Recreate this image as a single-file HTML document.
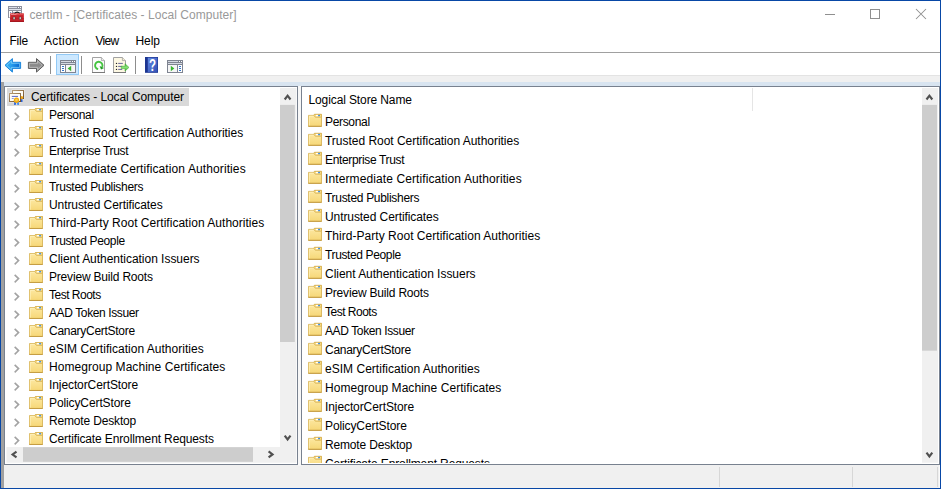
<!DOCTYPE html>
<html><head><meta charset="utf-8"><title>certlm</title>
<style>
html,body{margin:0;padding:0;background:#fff;}
body{width:941px;height:489px;overflow:hidden;position:relative;font-family:"Liberation Sans",sans-serif;font-size:12px;color:#000;}
#win{position:absolute;left:0;top:0;width:941px;height:489px;box-sizing:border-box;border:1px solid #0847a6;background:#fff;overflow:hidden;}
.a{position:absolute;}
.t{position:absolute;white-space:nowrap;line-height:18px;height:18px;}
.fo,.ch,.ic{position:absolute;overflow:visible;}
.pane{position:absolute;background:#fff;border:1px solid #78818f;box-sizing:border-box;overflow:hidden;}
</style></head><body>
<svg width="0" height="0" style="position:absolute"><defs>
<linearGradient id="fg" x1="0" y1="0" x2="0" y2="1"><stop offset="0" stop-color="#fde9a4"/><stop offset="1" stop-color="#f6d777"/></linearGradient>
</defs></svg>
<div id="win">

<div class="a" style="left:-1px;top:-1px;width:941px;height:489px;">
<svg class="ic" style="left:7px;top:4px" width="19" height="19" viewBox="7 4 19 19">
<rect x="8" y="6" width="14" height="12" fill="#8c909e"/>
<rect x="9" y="7" width="12" height="1" fill="#dadee7"/>
<rect x="17" y="7" width="1" height="1" fill="#8c909e"/><rect x="19" y="7" width="1" height="1" fill="#8c909e"/><rect x="18" y="7" width="1" height="1" fill="#fff"/><rect x="20" y="7" width="1" height="1" fill="#fff"/>
<rect x="9" y="9" width="12" height="1" fill="#dfe3ec"/>
<rect x="9" y="11" width="12" height="6.4" fill="#fff"/>
<rect x="12" y="11" width="1" height="7" fill="#8c909e"/>
<rect x="13" y="12" width="8" height="1" fill="#9da1ae"/>
<rect x="10" y="12" width="1.2" height="1" fill="#7d8cb5"/>
<path d="M14.4 13.8 Q17.1 10.4 19.8 13.8" fill="none" stroke="#161616" stroke-width="1.2"/>
<path d="M10.2 13.5 L23.8 13.5 L24 22 L10 22 Z" fill="#c9242c"/>
<rect x="10.2" y="13.5" width="13.6" height="1.6" fill="#de4a4f"/>
<rect x="11" y="14.1" width="5.5" height="0.7" fill="#f0a0a2"/>
<rect x="10.1" y="18.3" width="13.8" height="0.6" fill="#b01c24"/>
<rect x="10" y="20.8" width="14" height="1.2" fill="#a5161e"/>
<rect x="13.1" y="16.9" width="1.9" height="2.6" fill="#d4ebea" stroke="#5b1a1c" stroke-width="0.5"/>
<rect x="19.2" y="16.9" width="1.9" height="2.6" fill="#d4ebea" stroke="#5b1a1c" stroke-width="0.5"/>
</svg>
<div class="t" style="left:29.5px;top:6px;color:#999;letter-spacing:0.046px;">certlm - [Certificates - Local Computer]</div>
<svg class="ic" style="left:820px;top:4px" width="112" height="20" viewBox="820 4 112 20">
<path d="M825 14.5 H835" stroke="#8f8f8f" stroke-width="1"/>
<rect x="870.5" y="9.5" width="9" height="9" fill="none" stroke="#8f8f8f" stroke-width="1"/>
<path d="M916 9 L926 19 M926 9 L916 19" stroke="#8f8f8f" stroke-width="1.05"/>
</svg>
<div class="t" style="left:9.4px;top:32px;letter-spacing:-0.200px;">File</div>
<div class="t" style="left:44px;top:32px;letter-spacing:0.240px;">Action</div>
<div class="t" style="left:95.4px;top:32px;letter-spacing:-0.633px;">View</div>
<div class="t" style="left:135.4px;top:32px;letter-spacing:-0.033px;">Help</div>
<div class="a" style="left:1px;top:52px;width:939px;height:1px;background:#a0a0a0"></div>
<div class="a" style="left:1px;top:75px;width:939px;height:1px;background:#e3e3e3"></div>
<div class="a" style="left:1px;top:76px;width:939px;height:412px;background:#f0f0f0"></div>
<div class="a" style="left:4px;top:82px;width:936px;height:5px;background:#d8e4f0"></div>
<div class="a" style="left:1px;top:82px;width:3px;height:406px;background:#a0a0a0"></div>
<div class="a" style="left:298px;top:86px;width:3px;height:380px;background:#f7f7f7"></div>
<svg class="ic" style="left:0px;top:53px" width="200" height="22" viewBox="0 53 200 22">
<defs>
<linearGradient id="ba" x1="0" y1="0" x2="1" y2="0.25"><stop offset="0" stop-color="#3db5f6"/><stop offset="0.45" stop-color="#2aa3f0"/><stop offset="1" stop-color="#0668d2"/></linearGradient>
<linearGradient id="ga" x1="0" y1="0" x2="0" y2="1"><stop offset="0" stop-color="#a4a4a4"/><stop offset="0.5" stop-color="#8a8a8a"/><stop offset="1" stop-color="#a8a8a8"/></linearGradient>
<linearGradient id="hb" x1="0" y1="0" x2="1" y2="1"><stop offset="0" stop-color="#6288e2"/><stop offset="1" stop-color="#3350b4"/></linearGradient>
<linearGradient id="ar" x1="0" y1="0" x2="0" y2="1"><stop offset="0" stop-color="#3db230"/><stop offset="0.5" stop-color="#86e276"/><stop offset="1" stop-color="#35a82a"/></linearGradient>
</defs>
<path d="M5 65.3 L12.4 58.6 L12.4 62.3 L20.6 62.3 L20.6 68.4 L12.4 68.4 L12.4 72.1 Z" fill="url(#ba)" stroke="#1c86dc" stroke-width="1" stroke-linejoin="round"/>
<path d="M6.7 65.3 L11.4 61 L11.4 63.3 L19.6 63.3 L19.6 67.4 L11.4 67.4 L11.4 69.7 Z" fill="none" stroke="#8ad6fb" stroke-width="0.8" opacity="0.9"/>
<path d="M44 65.3 L36.5 58.6 L36.5 62.3 L28.4 62.3 L28.4 68.4 L36.5 68.4 L36.5 72.1 Z" fill="url(#ga)" stroke="#5c5c5c" stroke-width="1" stroke-linejoin="round"/>
<path d="M42.3 65.3 L37.5 61 L37.5 63.3 L29.4 63.3 L29.4 67.4 L37.5 67.4 L37.5 69.7 Z" fill="none" stroke="#c6c6c6" stroke-width="0.8" opacity="0.9"/>
<rect x="50" y="56" width="1" height="18" fill="#8d8d8d"/>
<rect x="56.5" y="54.5" width="22" height="20" fill="#cce8ff" stroke="#92c9f5" stroke-width="1"/>
<rect x="60" y="60" width="16" height="13" fill="#7f8491"/>
<rect x="61" y="61" width="14" height="1" fill="#d5d9e2"/>
<rect x="71" y="61" width="1" height="1" fill="#7f8491"/><rect x="73" y="61" width="1" height="1" fill="#7f8491"/>
<rect x="72" y="61" width="1" height="1" fill="#fff"/><rect x="74" y="61" width="1" height="1" fill="#fff"/>
<rect x="61" y="63" width="14" height="1" fill="#d5d9e2"/>
<rect x="61" y="65" width="4" height="7" fill="#fff"/>
<rect x="66" y="65" width="9" height="7" fill="#f6f6f6"/>
<rect x="62" y="66" width="2" height="1" fill="#3777c9"/>
<rect x="62" y="68" width="2" height="1" fill="#3777c9"/>
<rect x="62" y="70" width="2" height="1" fill="#3777c9"/>
<path d="M71.2 65.8 L71.2 71.2 L67.7 68.5 Z" fill="#37b42d"/>
<rect x="81" y="56" width="1" height="18" fill="#8d8d8d"/>
<path d="M92.5 57.5 L101.4 57.5 L104.5 60.6 L104.5 72.5 L92.5 72.5 Z" fill="#fcfcfc" stroke="#a2a2a2" stroke-width="1"/>
<path d="M101.4 57.5 L101.4 60.6 L104.5 60.6" fill="#ededed" stroke="#a2a2a2" stroke-width="0.8"/>
<rect x="92" y="72" width="13" height="1" fill="#7a7a7a"/>
<path d="M98.16 69.14 A3.7 3.7 0 1 1 102.15 67.06" fill="none" stroke="#45c440" stroke-width="1.9"/>
<path d="M101.05 69.6 L104.05 67.95 L99.6 66.0 Z" fill="#1f9f22"/>
<path d="M113.5 57.5 L122.4 57.5 L125.5 60.6 L125.5 72.5 L113.5 72.5 Z" fill="#fdf8e3" stroke="#a2a2a2" stroke-width="1"/>
<path d="M122.4 57.5 L122.4 60.6 L125.5 60.6" fill="#f3ecd0" stroke="#a2a2a2" stroke-width="0.8"/>
<rect x="113" y="72" width="13" height="1" fill="#7a7a7a"/>
<circle cx="116.5" cy="63.4" r="0.7" fill="#222"/><circle cx="116.5" cy="66.4" r="0.7" fill="#222"/><circle cx="116.5" cy="69.4" r="0.7" fill="#222"/>
<rect x="118.2" y="62.9" width="4.6" height="1" fill="#66669c"/><rect x="118.2" y="65.9" width="4" height="1" fill="#66669c"/><rect x="118.2" y="68.9" width="4" height="1" fill="#66669c"/>
<path d="M121.2 66.2 L125 66.2 L125 63.7 L129 67.4 L125 71.1 L125 68.6 L121.2 68.6 Z" fill="url(#ar)" stroke="#3aa82e" stroke-width="0.5"/>
<rect x="135" y="56" width="1" height="18" fill="#8d8d8d"/>
<rect x="145" y="57" width="13" height="15.8" fill="#1c3591"/>
<rect x="147.8" y="57.7" width="9.6" height="14.4" fill="url(#hb)"/>
<text transform="translate(152.5 70.9) scale(0.72 1)" font-family="Liberation Sans, sans-serif" font-weight="bold" font-size="16" fill="#fff" text-anchor="middle">?</text>
<rect x="167" y="60" width="16" height="13" fill="#7f8491"/>
<rect x="168" y="61" width="14" height="1" fill="#d5d9e2"/>
<rect x="178" y="61" width="1" height="1" fill="#7f8491"/><rect x="180" y="61" width="1" height="1" fill="#7f8491"/>
<rect x="179" y="61" width="1" height="1" fill="#fff"/><rect x="181" y="61" width="1" height="1" fill="#fff"/>
<rect x="168" y="63" width="14" height="1" fill="#d5d9e2"/>
<rect x="178" y="65" width="4" height="7" fill="#fff"/>
<rect x="168" y="65" width="9" height="7" fill="#f6f6f6"/>
<rect x="179" y="66" width="2" height="1" fill="#3777c9"/>
<rect x="179" y="68" width="2" height="1" fill="#3777c9"/>
<rect x="179" y="70" width="2" height="1" fill="#3777c9"/>
<path d="M170.8 65.8 L170.8 71.2 L174.3 68.5 Z" fill="#37b42d"/>
</svg>
<div class="pane" style="left:4px;top:86px;width:294px;height:379px;">
<div class="a" style="left:2px;top:1px;width:182px;height:18px;background:#d9d9d9"></div>
<svg class="ic" style="left:3px;top:1px" width="18" height="18" viewBox="8 88 18 18">
<defs><linearGradient id="cb" x1="0" y1="0" x2="1" y2="1"><stop offset="0" stop-color="#b89c76"/><stop offset="0.5" stop-color="#94744a"/><stop offset="1" stop-color="#6f4f2a"/></linearGradient></defs>
<rect x="11.6" y="89.6" width="12.8" height="9.8" fill="#fff" opacity="0.7"/>
<rect x="8.6" y="92.6" width="12.8" height="9.8" fill="#fff" opacity="0.7"/>
<rect x="12.5" y="90.5" width="11" height="8" fill="#fffdf6" stroke="url(#cb)" stroke-width="1"/>
<circle cx="21.6" cy="97.6" r="1.6" fill="#f0a818"/>
<rect x="21" y="99.2" width="1.5" height="2.8" fill="#2a62d8"/>
<rect x="9.5" y="93.5" width="11" height="8" fill="#fffdf8" stroke="url(#cb)" stroke-width="1"/>
<rect x="11.8" y="95.9" width="6.2" height="1" fill="#5a67c8"/>
<rect x="11.8" y="98" width="2" height="0.9" fill="#8a94d8"/>
<path d="M14.2 101.5 L14.2 105 L15.6 105 L16.2 102.5 Z" fill="#1f5fe0"/>
<path d="M18.9 101.5 L18.9 105 L17.5 105 L16.9 102.5 Z" fill="#3d86f0"/>
<circle cx="16.5" cy="100.2" r="2.7" fill="#f2ab12"/>
<circle cx="16.5" cy="100" r="1.3" fill="#f8cf58"/>
</svg>
<div class="t" style="left:26px;top:1px;letter-spacing:-0.086px;">Certificates - Local Computer</div>
<svg class="ch" style="left:8px;top:24px" width="8" height="11" viewBox="0 0 8 11"><path d="M1.67 1.87 L5.57 5.6 L1.67 9.33" fill="none" stroke="#a3a3a3" stroke-width="1.6"/></svg>
<svg class="fo" style="left:24px;top:20px" width="15" height="15" viewBox="0 0 15 15"><g transform="translate(0 0.65)"><path d="M0.5 1.9 L5.9 1.9 L6.4 0.9 L13.5 0.9 L13.5 12.8 L0.5 12.8 Z" fill="url(#fg)" stroke="#d8b458" stroke-width="0.9"/><path d="M6.4 0.9 L13.5 0.9 L13.5 3.7 L7.3 3.7 L5.9 1.9 Z" fill="#f9dc86" stroke="#d8b458" stroke-width="0.9"/><path d="M1.3 12 L1.3 2.7 L5.8 2.7" fill="none" stroke="#fff3c4" stroke-width="0.7"/><path d="M0.3 12.85 L13.7 12.85" stroke="#c29a3f" stroke-width="0.9"/><rect x="7.9" y="1.4" width="2.2" height="1.3" fill="#fff"/><rect x="10.1" y="1.4" width="1.9" height="1.3" fill="#3b8fe8"/></g></svg>
<div class="t" style="left:44px;top:19px;letter-spacing:-0.329px;">Personal</div>
<svg class="ch" style="left:8px;top:42px" width="8" height="11" viewBox="0 0 8 11"><path d="M1.67 1.87 L5.57 5.6 L1.67 9.33" fill="none" stroke="#a3a3a3" stroke-width="1.6"/></svg>
<svg class="fo" style="left:24px;top:38px" width="15" height="15" viewBox="0 0 15 15"><g transform="translate(0 0.65)"><path d="M0.5 1.9 L5.9 1.9 L6.4 0.9 L13.5 0.9 L13.5 12.8 L0.5 12.8 Z" fill="url(#fg)" stroke="#d8b458" stroke-width="0.9"/><path d="M6.4 0.9 L13.5 0.9 L13.5 3.7 L7.3 3.7 L5.9 1.9 Z" fill="#f9dc86" stroke="#d8b458" stroke-width="0.9"/><path d="M1.3 12 L1.3 2.7 L5.8 2.7" fill="none" stroke="#fff3c4" stroke-width="0.7"/><path d="M0.3 12.85 L13.7 12.85" stroke="#c29a3f" stroke-width="0.9"/><rect x="7.9" y="1.4" width="2.2" height="1.3" fill="#fff"/><rect x="10.1" y="1.4" width="1.9" height="1.3" fill="#3b8fe8"/></g></svg>
<div class="t" style="left:44px;top:37px;letter-spacing:-0.022px;">Trusted Root Certification Authorities</div>
<svg class="ch" style="left:8px;top:60px" width="8" height="11" viewBox="0 0 8 11"><path d="M1.67 1.87 L5.57 5.6 L1.67 9.33" fill="none" stroke="#a3a3a3" stroke-width="1.6"/></svg>
<svg class="fo" style="left:24px;top:56px" width="15" height="15" viewBox="0 0 15 15"><g transform="translate(0 0.65)"><path d="M0.5 1.9 L5.9 1.9 L6.4 0.9 L13.5 0.9 L13.5 12.8 L0.5 12.8 Z" fill="url(#fg)" stroke="#d8b458" stroke-width="0.9"/><path d="M6.4 0.9 L13.5 0.9 L13.5 3.7 L7.3 3.7 L5.9 1.9 Z" fill="#f9dc86" stroke="#d8b458" stroke-width="0.9"/><path d="M1.3 12 L1.3 2.7 L5.8 2.7" fill="none" stroke="#fff3c4" stroke-width="0.7"/><path d="M0.3 12.85 L13.7 12.85" stroke="#c29a3f" stroke-width="0.9"/><rect x="7.9" y="1.4" width="2.2" height="1.3" fill="#fff"/><rect x="10.1" y="1.4" width="1.9" height="1.3" fill="#3b8fe8"/></g></svg>
<div class="t" style="left:44px;top:55px;letter-spacing:-0.340px;">Enterprise Trust</div>
<svg class="ch" style="left:8px;top:78px" width="8" height="11" viewBox="0 0 8 11"><path d="M1.67 1.87 L5.57 5.6 L1.67 9.33" fill="none" stroke="#a3a3a3" stroke-width="1.6"/></svg>
<svg class="fo" style="left:24px;top:74px" width="15" height="15" viewBox="0 0 15 15"><g transform="translate(0 0.65)"><path d="M0.5 1.9 L5.9 1.9 L6.4 0.9 L13.5 0.9 L13.5 12.8 L0.5 12.8 Z" fill="url(#fg)" stroke="#d8b458" stroke-width="0.9"/><path d="M6.4 0.9 L13.5 0.9 L13.5 3.7 L7.3 3.7 L5.9 1.9 Z" fill="#f9dc86" stroke="#d8b458" stroke-width="0.9"/><path d="M1.3 12 L1.3 2.7 L5.8 2.7" fill="none" stroke="#fff3c4" stroke-width="0.7"/><path d="M0.3 12.85 L13.7 12.85" stroke="#c29a3f" stroke-width="0.9"/><rect x="7.9" y="1.4" width="2.2" height="1.3" fill="#fff"/><rect x="10.1" y="1.4" width="1.9" height="1.3" fill="#3b8fe8"/></g></svg>
<div class="t" style="left:44px;top:73px;letter-spacing:0.105px;">Intermediate Certification Authorities</div>
<svg class="ch" style="left:8px;top:96px" width="8" height="11" viewBox="0 0 8 11"><path d="M1.67 1.87 L5.57 5.6 L1.67 9.33" fill="none" stroke="#a3a3a3" stroke-width="1.6"/></svg>
<svg class="fo" style="left:24px;top:92px" width="15" height="15" viewBox="0 0 15 15"><g transform="translate(0 0.65)"><path d="M0.5 1.9 L5.9 1.9 L6.4 0.9 L13.5 0.9 L13.5 12.8 L0.5 12.8 Z" fill="url(#fg)" stroke="#d8b458" stroke-width="0.9"/><path d="M6.4 0.9 L13.5 0.9 L13.5 3.7 L7.3 3.7 L5.9 1.9 Z" fill="#f9dc86" stroke="#d8b458" stroke-width="0.9"/><path d="M1.3 12 L1.3 2.7 L5.8 2.7" fill="none" stroke="#fff3c4" stroke-width="0.7"/><path d="M0.3 12.85 L13.7 12.85" stroke="#c29a3f" stroke-width="0.9"/><rect x="7.9" y="1.4" width="2.2" height="1.3" fill="#fff"/><rect x="10.1" y="1.4" width="1.9" height="1.3" fill="#3b8fe8"/></g></svg>
<div class="t" style="left:44px;top:91px;letter-spacing:-0.300px;">Trusted Publishers</div>
<svg class="ch" style="left:8px;top:114px" width="8" height="11" viewBox="0 0 8 11"><path d="M1.67 1.87 L5.57 5.6 L1.67 9.33" fill="none" stroke="#a3a3a3" stroke-width="1.6"/></svg>
<svg class="fo" style="left:24px;top:110px" width="15" height="15" viewBox="0 0 15 15"><g transform="translate(0 0.65)"><path d="M0.5 1.9 L5.9 1.9 L6.4 0.9 L13.5 0.9 L13.5 12.8 L0.5 12.8 Z" fill="url(#fg)" stroke="#d8b458" stroke-width="0.9"/><path d="M6.4 0.9 L13.5 0.9 L13.5 3.7 L7.3 3.7 L5.9 1.9 Z" fill="#f9dc86" stroke="#d8b458" stroke-width="0.9"/><path d="M1.3 12 L1.3 2.7 L5.8 2.7" fill="none" stroke="#fff3c4" stroke-width="0.7"/><path d="M0.3 12.85 L13.7 12.85" stroke="#c29a3f" stroke-width="0.9"/><rect x="7.9" y="1.4" width="2.2" height="1.3" fill="#fff"/><rect x="10.1" y="1.4" width="1.9" height="1.3" fill="#3b8fe8"/></g></svg>
<div class="t" style="left:44px;top:109px;letter-spacing:-0.081px;">Untrusted Certificates</div>
<svg class="ch" style="left:8px;top:132px" width="8" height="11" viewBox="0 0 8 11"><path d="M1.67 1.87 L5.57 5.6 L1.67 9.33" fill="none" stroke="#a3a3a3" stroke-width="1.6"/></svg>
<svg class="fo" style="left:24px;top:128px" width="15" height="15" viewBox="0 0 15 15"><g transform="translate(0 0.65)"><path d="M0.5 1.9 L5.9 1.9 L6.4 0.9 L13.5 0.9 L13.5 12.8 L0.5 12.8 Z" fill="url(#fg)" stroke="#d8b458" stroke-width="0.9"/><path d="M6.4 0.9 L13.5 0.9 L13.5 3.7 L7.3 3.7 L5.9 1.9 Z" fill="#f9dc86" stroke="#d8b458" stroke-width="0.9"/><path d="M1.3 12 L1.3 2.7 L5.8 2.7" fill="none" stroke="#fff3c4" stroke-width="0.7"/><path d="M0.3 12.85 L13.7 12.85" stroke="#c29a3f" stroke-width="0.9"/><rect x="7.9" y="1.4" width="2.2" height="1.3" fill="#fff"/><rect x="10.1" y="1.4" width="1.9" height="1.3" fill="#3b8fe8"/></g></svg>
<div class="t" style="left:44px;top:127px;letter-spacing:0.029px;">Third-Party Root Certification Authorities</div>
<svg class="ch" style="left:8px;top:150px" width="8" height="11" viewBox="0 0 8 11"><path d="M1.67 1.87 L5.57 5.6 L1.67 9.33" fill="none" stroke="#a3a3a3" stroke-width="1.6"/></svg>
<svg class="fo" style="left:24px;top:146px" width="15" height="15" viewBox="0 0 15 15"><g transform="translate(0 0.65)"><path d="M0.5 1.9 L5.9 1.9 L6.4 0.9 L13.5 0.9 L13.5 12.8 L0.5 12.8 Z" fill="url(#fg)" stroke="#d8b458" stroke-width="0.9"/><path d="M6.4 0.9 L13.5 0.9 L13.5 3.7 L7.3 3.7 L5.9 1.9 Z" fill="#f9dc86" stroke="#d8b458" stroke-width="0.9"/><path d="M1.3 12 L1.3 2.7 L5.8 2.7" fill="none" stroke="#fff3c4" stroke-width="0.7"/><path d="M0.3 12.85 L13.7 12.85" stroke="#c29a3f" stroke-width="0.9"/><rect x="7.9" y="1.4" width="2.2" height="1.3" fill="#fff"/><rect x="10.1" y="1.4" width="1.9" height="1.3" fill="#3b8fe8"/></g></svg>
<div class="t" style="left:44px;top:145px;letter-spacing:-0.369px;">Trusted People</div>
<svg class="ch" style="left:8px;top:168px" width="8" height="11" viewBox="0 0 8 11"><path d="M1.67 1.87 L5.57 5.6 L1.67 9.33" fill="none" stroke="#a3a3a3" stroke-width="1.6"/></svg>
<svg class="fo" style="left:24px;top:164px" width="15" height="15" viewBox="0 0 15 15"><g transform="translate(0 0.65)"><path d="M0.5 1.9 L5.9 1.9 L6.4 0.9 L13.5 0.9 L13.5 12.8 L0.5 12.8 Z" fill="url(#fg)" stroke="#d8b458" stroke-width="0.9"/><path d="M6.4 0.9 L13.5 0.9 L13.5 3.7 L7.3 3.7 L5.9 1.9 Z" fill="#f9dc86" stroke="#d8b458" stroke-width="0.9"/><path d="M1.3 12 L1.3 2.7 L5.8 2.7" fill="none" stroke="#fff3c4" stroke-width="0.7"/><path d="M0.3 12.85 L13.7 12.85" stroke="#c29a3f" stroke-width="0.9"/><rect x="7.9" y="1.4" width="2.2" height="1.3" fill="#fff"/><rect x="10.1" y="1.4" width="1.9" height="1.3" fill="#3b8fe8"/></g></svg>
<div class="t" style="left:44px;top:163px;letter-spacing:-0.029px;">Client Authentication Issuers</div>
<svg class="ch" style="left:8px;top:186px" width="8" height="11" viewBox="0 0 8 11"><path d="M1.67 1.87 L5.57 5.6 L1.67 9.33" fill="none" stroke="#a3a3a3" stroke-width="1.6"/></svg>
<svg class="fo" style="left:24px;top:182px" width="15" height="15" viewBox="0 0 15 15"><g transform="translate(0 0.65)"><path d="M0.5 1.9 L5.9 1.9 L6.4 0.9 L13.5 0.9 L13.5 12.8 L0.5 12.8 Z" fill="url(#fg)" stroke="#d8b458" stroke-width="0.9"/><path d="M6.4 0.9 L13.5 0.9 L13.5 3.7 L7.3 3.7 L5.9 1.9 Z" fill="#f9dc86" stroke="#d8b458" stroke-width="0.9"/><path d="M1.3 12 L1.3 2.7 L5.8 2.7" fill="none" stroke="#fff3c4" stroke-width="0.7"/><path d="M0.3 12.85 L13.7 12.85" stroke="#c29a3f" stroke-width="0.9"/><rect x="7.9" y="1.4" width="2.2" height="1.3" fill="#fff"/><rect x="10.1" y="1.4" width="1.9" height="1.3" fill="#3b8fe8"/></g></svg>
<div class="t" style="left:44px;top:181px;letter-spacing:-0.189px;">Preview Build Roots</div>
<svg class="ch" style="left:8px;top:204px" width="8" height="11" viewBox="0 0 8 11"><path d="M1.67 1.87 L5.57 5.6 L1.67 9.33" fill="none" stroke="#a3a3a3" stroke-width="1.6"/></svg>
<svg class="fo" style="left:24px;top:200px" width="15" height="15" viewBox="0 0 15 15"><g transform="translate(0 0.65)"><path d="M0.5 1.9 L5.9 1.9 L6.4 0.9 L13.5 0.9 L13.5 12.8 L0.5 12.8 Z" fill="url(#fg)" stroke="#d8b458" stroke-width="0.9"/><path d="M6.4 0.9 L13.5 0.9 L13.5 3.7 L7.3 3.7 L5.9 1.9 Z" fill="#f9dc86" stroke="#d8b458" stroke-width="0.9"/><path d="M1.3 12 L1.3 2.7 L5.8 2.7" fill="none" stroke="#fff3c4" stroke-width="0.7"/><path d="M0.3 12.85 L13.7 12.85" stroke="#c29a3f" stroke-width="0.9"/><rect x="7.9" y="1.4" width="2.2" height="1.3" fill="#fff"/><rect x="10.1" y="1.4" width="1.9" height="1.3" fill="#3b8fe8"/></g></svg>
<div class="t" style="left:44px;top:199px;letter-spacing:-0.500px;">Test Roots</div>
<svg class="ch" style="left:8px;top:222px" width="8" height="11" viewBox="0 0 8 11"><path d="M1.67 1.87 L5.57 5.6 L1.67 9.33" fill="none" stroke="#a3a3a3" stroke-width="1.6"/></svg>
<svg class="fo" style="left:24px;top:218px" width="15" height="15" viewBox="0 0 15 15"><g transform="translate(0 0.65)"><path d="M0.5 1.9 L5.9 1.9 L6.4 0.9 L13.5 0.9 L13.5 12.8 L0.5 12.8 Z" fill="url(#fg)" stroke="#d8b458" stroke-width="0.9"/><path d="M6.4 0.9 L13.5 0.9 L13.5 3.7 L7.3 3.7 L5.9 1.9 Z" fill="#f9dc86" stroke="#d8b458" stroke-width="0.9"/><path d="M1.3 12 L1.3 2.7 L5.8 2.7" fill="none" stroke="#fff3c4" stroke-width="0.7"/><path d="M0.3 12.85 L13.7 12.85" stroke="#c29a3f" stroke-width="0.9"/><rect x="7.9" y="1.4" width="2.2" height="1.3" fill="#fff"/><rect x="10.1" y="1.4" width="1.9" height="1.3" fill="#3b8fe8"/></g></svg>
<div class="t" style="left:44px;top:217px;letter-spacing:-0.387px;">AAD Token Issuer</div>
<svg class="ch" style="left:8px;top:240px" width="8" height="11" viewBox="0 0 8 11"><path d="M1.67 1.87 L5.57 5.6 L1.67 9.33" fill="none" stroke="#a3a3a3" stroke-width="1.6"/></svg>
<svg class="fo" style="left:24px;top:236px" width="15" height="15" viewBox="0 0 15 15"><g transform="translate(0 0.65)"><path d="M0.5 1.9 L5.9 1.9 L6.4 0.9 L13.5 0.9 L13.5 12.8 L0.5 12.8 Z" fill="url(#fg)" stroke="#d8b458" stroke-width="0.9"/><path d="M6.4 0.9 L13.5 0.9 L13.5 3.7 L7.3 3.7 L5.9 1.9 Z" fill="#f9dc86" stroke="#d8b458" stroke-width="0.9"/><path d="M1.3 12 L1.3 2.7 L5.8 2.7" fill="none" stroke="#fff3c4" stroke-width="0.7"/><path d="M0.3 12.85 L13.7 12.85" stroke="#c29a3f" stroke-width="0.9"/><rect x="7.9" y="1.4" width="2.2" height="1.3" fill="#fff"/><rect x="10.1" y="1.4" width="1.9" height="1.3" fill="#3b8fe8"/></g></svg>
<div class="t" style="left:44px;top:235px;letter-spacing:-0.279px;">CanaryCertStore</div>
<svg class="ch" style="left:8px;top:258px" width="8" height="11" viewBox="0 0 8 11"><path d="M1.67 1.87 L5.57 5.6 L1.67 9.33" fill="none" stroke="#a3a3a3" stroke-width="1.6"/></svg>
<svg class="fo" style="left:24px;top:254px" width="15" height="15" viewBox="0 0 15 15"><g transform="translate(0 0.65)"><path d="M0.5 1.9 L5.9 1.9 L6.4 0.9 L13.5 0.9 L13.5 12.8 L0.5 12.8 Z" fill="url(#fg)" stroke="#d8b458" stroke-width="0.9"/><path d="M6.4 0.9 L13.5 0.9 L13.5 3.7 L7.3 3.7 L5.9 1.9 Z" fill="#f9dc86" stroke="#d8b458" stroke-width="0.9"/><path d="M1.3 12 L1.3 2.7 L5.8 2.7" fill="none" stroke="#fff3c4" stroke-width="0.7"/><path d="M0.3 12.85 L13.7 12.85" stroke="#c29a3f" stroke-width="0.9"/><rect x="7.9" y="1.4" width="2.2" height="1.3" fill="#fff"/><rect x="10.1" y="1.4" width="1.9" height="1.3" fill="#3b8fe8"/></g></svg>
<div class="t" style="left:44px;top:253px;letter-spacing:0.021px;">eSIM Certification Authorities</div>
<svg class="ch" style="left:8px;top:276px" width="8" height="11" viewBox="0 0 8 11"><path d="M1.67 1.87 L5.57 5.6 L1.67 9.33" fill="none" stroke="#a3a3a3" stroke-width="1.6"/></svg>
<svg class="fo" style="left:24px;top:272px" width="15" height="15" viewBox="0 0 15 15"><g transform="translate(0 0.65)"><path d="M0.5 1.9 L5.9 1.9 L6.4 0.9 L13.5 0.9 L13.5 12.8 L0.5 12.8 Z" fill="url(#fg)" stroke="#d8b458" stroke-width="0.9"/><path d="M6.4 0.9 L13.5 0.9 L13.5 3.7 L7.3 3.7 L5.9 1.9 Z" fill="#f9dc86" stroke="#d8b458" stroke-width="0.9"/><path d="M1.3 12 L1.3 2.7 L5.8 2.7" fill="none" stroke="#fff3c4" stroke-width="0.7"/><path d="M0.3 12.85 L13.7 12.85" stroke="#c29a3f" stroke-width="0.9"/><rect x="7.9" y="1.4" width="2.2" height="1.3" fill="#fff"/><rect x="10.1" y="1.4" width="1.9" height="1.3" fill="#3b8fe8"/></g></svg>
<div class="t" style="left:44px;top:271px;letter-spacing:0.055px;">Homegroup Machine Certificates</div>
<svg class="ch" style="left:8px;top:294px" width="8" height="11" viewBox="0 0 8 11"><path d="M1.67 1.87 L5.57 5.6 L1.67 9.33" fill="none" stroke="#a3a3a3" stroke-width="1.6"/></svg>
<svg class="fo" style="left:24px;top:290px" width="15" height="15" viewBox="0 0 15 15"><g transform="translate(0 0.65)"><path d="M0.5 1.9 L5.9 1.9 L6.4 0.9 L13.5 0.9 L13.5 12.8 L0.5 12.8 Z" fill="url(#fg)" stroke="#d8b458" stroke-width="0.9"/><path d="M6.4 0.9 L13.5 0.9 L13.5 3.7 L7.3 3.7 L5.9 1.9 Z" fill="#f9dc86" stroke="#d8b458" stroke-width="0.9"/><path d="M1.3 12 L1.3 2.7 L5.8 2.7" fill="none" stroke="#fff3c4" stroke-width="0.7"/><path d="M0.3 12.85 L13.7 12.85" stroke="#c29a3f" stroke-width="0.9"/><rect x="7.9" y="1.4" width="2.2" height="1.3" fill="#fff"/><rect x="10.1" y="1.4" width="1.9" height="1.3" fill="#3b8fe8"/></g></svg>
<div class="t" style="left:44px;top:289px;letter-spacing:-0.094px;">InjectorCertStore</div>
<svg class="ch" style="left:8px;top:312px" width="8" height="11" viewBox="0 0 8 11"><path d="M1.67 1.87 L5.57 5.6 L1.67 9.33" fill="none" stroke="#a3a3a3" stroke-width="1.6"/></svg>
<svg class="fo" style="left:24px;top:308px" width="15" height="15" viewBox="0 0 15 15"><g transform="translate(0 0.65)"><path d="M0.5 1.9 L5.9 1.9 L6.4 0.9 L13.5 0.9 L13.5 12.8 L0.5 12.8 Z" fill="url(#fg)" stroke="#d8b458" stroke-width="0.9"/><path d="M6.4 0.9 L13.5 0.9 L13.5 3.7 L7.3 3.7 L5.9 1.9 Z" fill="#f9dc86" stroke="#d8b458" stroke-width="0.9"/><path d="M1.3 12 L1.3 2.7 L5.8 2.7" fill="none" stroke="#fff3c4" stroke-width="0.7"/><path d="M0.3 12.85 L13.7 12.85" stroke="#c29a3f" stroke-width="0.9"/><rect x="7.9" y="1.4" width="2.2" height="1.3" fill="#fff"/><rect x="10.1" y="1.4" width="1.9" height="1.3" fill="#3b8fe8"/></g></svg>
<div class="t" style="left:44px;top:307px;letter-spacing:-0.107px;">PolicyCertStore</div>
<svg class="ch" style="left:8px;top:330px" width="8" height="11" viewBox="0 0 8 11"><path d="M1.67 1.87 L5.57 5.6 L1.67 9.33" fill="none" stroke="#a3a3a3" stroke-width="1.6"/></svg>
<svg class="fo" style="left:24px;top:326px" width="15" height="15" viewBox="0 0 15 15"><g transform="translate(0 0.65)"><path d="M0.5 1.9 L5.9 1.9 L6.4 0.9 L13.5 0.9 L13.5 12.8 L0.5 12.8 Z" fill="url(#fg)" stroke="#d8b458" stroke-width="0.9"/><path d="M6.4 0.9 L13.5 0.9 L13.5 3.7 L7.3 3.7 L5.9 1.9 Z" fill="#f9dc86" stroke="#d8b458" stroke-width="0.9"/><path d="M1.3 12 L1.3 2.7 L5.8 2.7" fill="none" stroke="#fff3c4" stroke-width="0.7"/><path d="M0.3 12.85 L13.7 12.85" stroke="#c29a3f" stroke-width="0.9"/><rect x="7.9" y="1.4" width="2.2" height="1.3" fill="#fff"/><rect x="10.1" y="1.4" width="1.9" height="1.3" fill="#3b8fe8"/></g></svg>
<div class="t" style="left:44px;top:325px;letter-spacing:-0.162px;">Remote Desktop</div>
<svg class="ch" style="left:8px;top:348px" width="8" height="11" viewBox="0 0 8 11"><path d="M1.67 1.87 L5.57 5.6 L1.67 9.33" fill="none" stroke="#a3a3a3" stroke-width="1.6"/></svg>
<svg class="fo" style="left:24px;top:344px" width="15" height="15" viewBox="0 0 15 15"><g transform="translate(0 0.65)"><path d="M0.5 1.9 L5.9 1.9 L6.4 0.9 L13.5 0.9 L13.5 12.8 L0.5 12.8 Z" fill="url(#fg)" stroke="#d8b458" stroke-width="0.9"/><path d="M6.4 0.9 L13.5 0.9 L13.5 3.7 L7.3 3.7 L5.9 1.9 Z" fill="#f9dc86" stroke="#d8b458" stroke-width="0.9"/><path d="M1.3 12 L1.3 2.7 L5.8 2.7" fill="none" stroke="#fff3c4" stroke-width="0.7"/><path d="M0.3 12.85 L13.7 12.85" stroke="#c29a3f" stroke-width="0.9"/><rect x="7.9" y="1.4" width="2.2" height="1.3" fill="#fff"/><rect x="10.1" y="1.4" width="1.9" height="1.3" fill="#3b8fe8"/></g></svg>
<div class="t" style="left:44px;top:343px;letter-spacing:-0.127px;">Certificate Enrollment Requests</div>
</div>
<div class="pane" style="left:301px;top:86px;width:639px;height:379px;">
<div class="t" style="left:6.5px;top:4px;letter-spacing:-0.112px;">Logical Store Name</div>
<div class="a" style="left:450px;top:1px;width:1px;height:23px;background:#e5e5e5"></div>
<svg class="fo" style="left:6px;top:26px" width="15" height="15" viewBox="0 0 15 15"><g transform="translate(0 0.5)"><path d="M0.5 1.9 L5.9 1.9 L6.4 0.9 L13.5 0.9 L13.5 12.8 L0.5 12.8 Z" fill="url(#fg)" stroke="#d8b458" stroke-width="0.9"/><path d="M6.4 0.9 L13.5 0.9 L13.5 3.7 L7.3 3.7 L5.9 1.9 Z" fill="#f9dc86" stroke="#d8b458" stroke-width="0.9"/><path d="M1.3 12 L1.3 2.7 L5.8 2.7" fill="none" stroke="#fff3c4" stroke-width="0.7"/><path d="M0.3 12.85 L13.7 12.85" stroke="#c29a3f" stroke-width="0.9"/><rect x="7.9" y="1.4" width="2.2" height="1.3" fill="#fff"/><rect x="10.1" y="1.4" width="1.9" height="1.3" fill="#3b8fe8"/></g></svg>
<div class="t" style="left:23px;top:26px;line-height:19px;height:19px;letter-spacing:-0.329px;">Personal</div>
<svg class="fo" style="left:6px;top:45px" width="15" height="15" viewBox="0 0 15 15"><g transform="translate(0 0.5)"><path d="M0.5 1.9 L5.9 1.9 L6.4 0.9 L13.5 0.9 L13.5 12.8 L0.5 12.8 Z" fill="url(#fg)" stroke="#d8b458" stroke-width="0.9"/><path d="M6.4 0.9 L13.5 0.9 L13.5 3.7 L7.3 3.7 L5.9 1.9 Z" fill="#f9dc86" stroke="#d8b458" stroke-width="0.9"/><path d="M1.3 12 L1.3 2.7 L5.8 2.7" fill="none" stroke="#fff3c4" stroke-width="0.7"/><path d="M0.3 12.85 L13.7 12.85" stroke="#c29a3f" stroke-width="0.9"/><rect x="7.9" y="1.4" width="2.2" height="1.3" fill="#fff"/><rect x="10.1" y="1.4" width="1.9" height="1.3" fill="#3b8fe8"/></g></svg>
<div class="t" style="left:23px;top:45px;line-height:19px;height:19px;letter-spacing:-0.022px;">Trusted Root Certification Authorities</div>
<svg class="fo" style="left:6px;top:64px" width="15" height="15" viewBox="0 0 15 15"><g transform="translate(0 0.5)"><path d="M0.5 1.9 L5.9 1.9 L6.4 0.9 L13.5 0.9 L13.5 12.8 L0.5 12.8 Z" fill="url(#fg)" stroke="#d8b458" stroke-width="0.9"/><path d="M6.4 0.9 L13.5 0.9 L13.5 3.7 L7.3 3.7 L5.9 1.9 Z" fill="#f9dc86" stroke="#d8b458" stroke-width="0.9"/><path d="M1.3 12 L1.3 2.7 L5.8 2.7" fill="none" stroke="#fff3c4" stroke-width="0.7"/><path d="M0.3 12.85 L13.7 12.85" stroke="#c29a3f" stroke-width="0.9"/><rect x="7.9" y="1.4" width="2.2" height="1.3" fill="#fff"/><rect x="10.1" y="1.4" width="1.9" height="1.3" fill="#3b8fe8"/></g></svg>
<div class="t" style="left:23px;top:64px;line-height:19px;height:19px;letter-spacing:-0.340px;">Enterprise Trust</div>
<svg class="fo" style="left:6px;top:83px" width="15" height="15" viewBox="0 0 15 15"><g transform="translate(0 0.5)"><path d="M0.5 1.9 L5.9 1.9 L6.4 0.9 L13.5 0.9 L13.5 12.8 L0.5 12.8 Z" fill="url(#fg)" stroke="#d8b458" stroke-width="0.9"/><path d="M6.4 0.9 L13.5 0.9 L13.5 3.7 L7.3 3.7 L5.9 1.9 Z" fill="#f9dc86" stroke="#d8b458" stroke-width="0.9"/><path d="M1.3 12 L1.3 2.7 L5.8 2.7" fill="none" stroke="#fff3c4" stroke-width="0.7"/><path d="M0.3 12.85 L13.7 12.85" stroke="#c29a3f" stroke-width="0.9"/><rect x="7.9" y="1.4" width="2.2" height="1.3" fill="#fff"/><rect x="10.1" y="1.4" width="1.9" height="1.3" fill="#3b8fe8"/></g></svg>
<div class="t" style="left:23px;top:83px;line-height:19px;height:19px;letter-spacing:0.105px;">Intermediate Certification Authorities</div>
<svg class="fo" style="left:6px;top:102px" width="15" height="15" viewBox="0 0 15 15"><g transform="translate(0 0.5)"><path d="M0.5 1.9 L5.9 1.9 L6.4 0.9 L13.5 0.9 L13.5 12.8 L0.5 12.8 Z" fill="url(#fg)" stroke="#d8b458" stroke-width="0.9"/><path d="M6.4 0.9 L13.5 0.9 L13.5 3.7 L7.3 3.7 L5.9 1.9 Z" fill="#f9dc86" stroke="#d8b458" stroke-width="0.9"/><path d="M1.3 12 L1.3 2.7 L5.8 2.7" fill="none" stroke="#fff3c4" stroke-width="0.7"/><path d="M0.3 12.85 L13.7 12.85" stroke="#c29a3f" stroke-width="0.9"/><rect x="7.9" y="1.4" width="2.2" height="1.3" fill="#fff"/><rect x="10.1" y="1.4" width="1.9" height="1.3" fill="#3b8fe8"/></g></svg>
<div class="t" style="left:23px;top:102px;line-height:19px;height:19px;letter-spacing:-0.300px;">Trusted Publishers</div>
<svg class="fo" style="left:6px;top:121px" width="15" height="15" viewBox="0 0 15 15"><g transform="translate(0 0.5)"><path d="M0.5 1.9 L5.9 1.9 L6.4 0.9 L13.5 0.9 L13.5 12.8 L0.5 12.8 Z" fill="url(#fg)" stroke="#d8b458" stroke-width="0.9"/><path d="M6.4 0.9 L13.5 0.9 L13.5 3.7 L7.3 3.7 L5.9 1.9 Z" fill="#f9dc86" stroke="#d8b458" stroke-width="0.9"/><path d="M1.3 12 L1.3 2.7 L5.8 2.7" fill="none" stroke="#fff3c4" stroke-width="0.7"/><path d="M0.3 12.85 L13.7 12.85" stroke="#c29a3f" stroke-width="0.9"/><rect x="7.9" y="1.4" width="2.2" height="1.3" fill="#fff"/><rect x="10.1" y="1.4" width="1.9" height="1.3" fill="#3b8fe8"/></g></svg>
<div class="t" style="left:23px;top:121px;line-height:19px;height:19px;letter-spacing:-0.081px;">Untrusted Certificates</div>
<svg class="fo" style="left:6px;top:140px" width="15" height="15" viewBox="0 0 15 15"><g transform="translate(0 0.5)"><path d="M0.5 1.9 L5.9 1.9 L6.4 0.9 L13.5 0.9 L13.5 12.8 L0.5 12.8 Z" fill="url(#fg)" stroke="#d8b458" stroke-width="0.9"/><path d="M6.4 0.9 L13.5 0.9 L13.5 3.7 L7.3 3.7 L5.9 1.9 Z" fill="#f9dc86" stroke="#d8b458" stroke-width="0.9"/><path d="M1.3 12 L1.3 2.7 L5.8 2.7" fill="none" stroke="#fff3c4" stroke-width="0.7"/><path d="M0.3 12.85 L13.7 12.85" stroke="#c29a3f" stroke-width="0.9"/><rect x="7.9" y="1.4" width="2.2" height="1.3" fill="#fff"/><rect x="10.1" y="1.4" width="1.9" height="1.3" fill="#3b8fe8"/></g></svg>
<div class="t" style="left:23px;top:140px;line-height:19px;height:19px;letter-spacing:0.029px;">Third-Party Root Certification Authorities</div>
<svg class="fo" style="left:6px;top:159px" width="15" height="15" viewBox="0 0 15 15"><g transform="translate(0 0.5)"><path d="M0.5 1.9 L5.9 1.9 L6.4 0.9 L13.5 0.9 L13.5 12.8 L0.5 12.8 Z" fill="url(#fg)" stroke="#d8b458" stroke-width="0.9"/><path d="M6.4 0.9 L13.5 0.9 L13.5 3.7 L7.3 3.7 L5.9 1.9 Z" fill="#f9dc86" stroke="#d8b458" stroke-width="0.9"/><path d="M1.3 12 L1.3 2.7 L5.8 2.7" fill="none" stroke="#fff3c4" stroke-width="0.7"/><path d="M0.3 12.85 L13.7 12.85" stroke="#c29a3f" stroke-width="0.9"/><rect x="7.9" y="1.4" width="2.2" height="1.3" fill="#fff"/><rect x="10.1" y="1.4" width="1.9" height="1.3" fill="#3b8fe8"/></g></svg>
<div class="t" style="left:23px;top:159px;line-height:19px;height:19px;letter-spacing:-0.369px;">Trusted People</div>
<svg class="fo" style="left:6px;top:178px" width="15" height="15" viewBox="0 0 15 15"><g transform="translate(0 0.5)"><path d="M0.5 1.9 L5.9 1.9 L6.4 0.9 L13.5 0.9 L13.5 12.8 L0.5 12.8 Z" fill="url(#fg)" stroke="#d8b458" stroke-width="0.9"/><path d="M6.4 0.9 L13.5 0.9 L13.5 3.7 L7.3 3.7 L5.9 1.9 Z" fill="#f9dc86" stroke="#d8b458" stroke-width="0.9"/><path d="M1.3 12 L1.3 2.7 L5.8 2.7" fill="none" stroke="#fff3c4" stroke-width="0.7"/><path d="M0.3 12.85 L13.7 12.85" stroke="#c29a3f" stroke-width="0.9"/><rect x="7.9" y="1.4" width="2.2" height="1.3" fill="#fff"/><rect x="10.1" y="1.4" width="1.9" height="1.3" fill="#3b8fe8"/></g></svg>
<div class="t" style="left:23px;top:178px;line-height:19px;height:19px;letter-spacing:-0.029px;">Client Authentication Issuers</div>
<svg class="fo" style="left:6px;top:197px" width="15" height="15" viewBox="0 0 15 15"><g transform="translate(0 0.5)"><path d="M0.5 1.9 L5.9 1.9 L6.4 0.9 L13.5 0.9 L13.5 12.8 L0.5 12.8 Z" fill="url(#fg)" stroke="#d8b458" stroke-width="0.9"/><path d="M6.4 0.9 L13.5 0.9 L13.5 3.7 L7.3 3.7 L5.9 1.9 Z" fill="#f9dc86" stroke="#d8b458" stroke-width="0.9"/><path d="M1.3 12 L1.3 2.7 L5.8 2.7" fill="none" stroke="#fff3c4" stroke-width="0.7"/><path d="M0.3 12.85 L13.7 12.85" stroke="#c29a3f" stroke-width="0.9"/><rect x="7.9" y="1.4" width="2.2" height="1.3" fill="#fff"/><rect x="10.1" y="1.4" width="1.9" height="1.3" fill="#3b8fe8"/></g></svg>
<div class="t" style="left:23px;top:197px;line-height:19px;height:19px;letter-spacing:-0.189px;">Preview Build Roots</div>
<svg class="fo" style="left:6px;top:216px" width="15" height="15" viewBox="0 0 15 15"><g transform="translate(0 0.5)"><path d="M0.5 1.9 L5.9 1.9 L6.4 0.9 L13.5 0.9 L13.5 12.8 L0.5 12.8 Z" fill="url(#fg)" stroke="#d8b458" stroke-width="0.9"/><path d="M6.4 0.9 L13.5 0.9 L13.5 3.7 L7.3 3.7 L5.9 1.9 Z" fill="#f9dc86" stroke="#d8b458" stroke-width="0.9"/><path d="M1.3 12 L1.3 2.7 L5.8 2.7" fill="none" stroke="#fff3c4" stroke-width="0.7"/><path d="M0.3 12.85 L13.7 12.85" stroke="#c29a3f" stroke-width="0.9"/><rect x="7.9" y="1.4" width="2.2" height="1.3" fill="#fff"/><rect x="10.1" y="1.4" width="1.9" height="1.3" fill="#3b8fe8"/></g></svg>
<div class="t" style="left:23px;top:216px;line-height:19px;height:19px;letter-spacing:-0.500px;">Test Roots</div>
<svg class="fo" style="left:6px;top:235px" width="15" height="15" viewBox="0 0 15 15"><g transform="translate(0 0.5)"><path d="M0.5 1.9 L5.9 1.9 L6.4 0.9 L13.5 0.9 L13.5 12.8 L0.5 12.8 Z" fill="url(#fg)" stroke="#d8b458" stroke-width="0.9"/><path d="M6.4 0.9 L13.5 0.9 L13.5 3.7 L7.3 3.7 L5.9 1.9 Z" fill="#f9dc86" stroke="#d8b458" stroke-width="0.9"/><path d="M1.3 12 L1.3 2.7 L5.8 2.7" fill="none" stroke="#fff3c4" stroke-width="0.7"/><path d="M0.3 12.85 L13.7 12.85" stroke="#c29a3f" stroke-width="0.9"/><rect x="7.9" y="1.4" width="2.2" height="1.3" fill="#fff"/><rect x="10.1" y="1.4" width="1.9" height="1.3" fill="#3b8fe8"/></g></svg>
<div class="t" style="left:23px;top:235px;line-height:19px;height:19px;letter-spacing:-0.387px;">AAD Token Issuer</div>
<svg class="fo" style="left:6px;top:254px" width="15" height="15" viewBox="0 0 15 15"><g transform="translate(0 0.5)"><path d="M0.5 1.9 L5.9 1.9 L6.4 0.9 L13.5 0.9 L13.5 12.8 L0.5 12.8 Z" fill="url(#fg)" stroke="#d8b458" stroke-width="0.9"/><path d="M6.4 0.9 L13.5 0.9 L13.5 3.7 L7.3 3.7 L5.9 1.9 Z" fill="#f9dc86" stroke="#d8b458" stroke-width="0.9"/><path d="M1.3 12 L1.3 2.7 L5.8 2.7" fill="none" stroke="#fff3c4" stroke-width="0.7"/><path d="M0.3 12.85 L13.7 12.85" stroke="#c29a3f" stroke-width="0.9"/><rect x="7.9" y="1.4" width="2.2" height="1.3" fill="#fff"/><rect x="10.1" y="1.4" width="1.9" height="1.3" fill="#3b8fe8"/></g></svg>
<div class="t" style="left:23px;top:254px;line-height:19px;height:19px;letter-spacing:-0.279px;">CanaryCertStore</div>
<svg class="fo" style="left:6px;top:273px" width="15" height="15" viewBox="0 0 15 15"><g transform="translate(0 0.5)"><path d="M0.5 1.9 L5.9 1.9 L6.4 0.9 L13.5 0.9 L13.5 12.8 L0.5 12.8 Z" fill="url(#fg)" stroke="#d8b458" stroke-width="0.9"/><path d="M6.4 0.9 L13.5 0.9 L13.5 3.7 L7.3 3.7 L5.9 1.9 Z" fill="#f9dc86" stroke="#d8b458" stroke-width="0.9"/><path d="M1.3 12 L1.3 2.7 L5.8 2.7" fill="none" stroke="#fff3c4" stroke-width="0.7"/><path d="M0.3 12.85 L13.7 12.85" stroke="#c29a3f" stroke-width="0.9"/><rect x="7.9" y="1.4" width="2.2" height="1.3" fill="#fff"/><rect x="10.1" y="1.4" width="1.9" height="1.3" fill="#3b8fe8"/></g></svg>
<div class="t" style="left:23px;top:273px;line-height:19px;height:19px;letter-spacing:0.021px;">eSIM Certification Authorities</div>
<svg class="fo" style="left:6px;top:292px" width="15" height="15" viewBox="0 0 15 15"><g transform="translate(0 0.5)"><path d="M0.5 1.9 L5.9 1.9 L6.4 0.9 L13.5 0.9 L13.5 12.8 L0.5 12.8 Z" fill="url(#fg)" stroke="#d8b458" stroke-width="0.9"/><path d="M6.4 0.9 L13.5 0.9 L13.5 3.7 L7.3 3.7 L5.9 1.9 Z" fill="#f9dc86" stroke="#d8b458" stroke-width="0.9"/><path d="M1.3 12 L1.3 2.7 L5.8 2.7" fill="none" stroke="#fff3c4" stroke-width="0.7"/><path d="M0.3 12.85 L13.7 12.85" stroke="#c29a3f" stroke-width="0.9"/><rect x="7.9" y="1.4" width="2.2" height="1.3" fill="#fff"/><rect x="10.1" y="1.4" width="1.9" height="1.3" fill="#3b8fe8"/></g></svg>
<div class="t" style="left:23px;top:292px;line-height:19px;height:19px;letter-spacing:0.055px;">Homegroup Machine Certificates</div>
<svg class="fo" style="left:6px;top:311px" width="15" height="15" viewBox="0 0 15 15"><g transform="translate(0 0.5)"><path d="M0.5 1.9 L5.9 1.9 L6.4 0.9 L13.5 0.9 L13.5 12.8 L0.5 12.8 Z" fill="url(#fg)" stroke="#d8b458" stroke-width="0.9"/><path d="M6.4 0.9 L13.5 0.9 L13.5 3.7 L7.3 3.7 L5.9 1.9 Z" fill="#f9dc86" stroke="#d8b458" stroke-width="0.9"/><path d="M1.3 12 L1.3 2.7 L5.8 2.7" fill="none" stroke="#fff3c4" stroke-width="0.7"/><path d="M0.3 12.85 L13.7 12.85" stroke="#c29a3f" stroke-width="0.9"/><rect x="7.9" y="1.4" width="2.2" height="1.3" fill="#fff"/><rect x="10.1" y="1.4" width="1.9" height="1.3" fill="#3b8fe8"/></g></svg>
<div class="t" style="left:23px;top:311px;line-height:19px;height:19px;letter-spacing:-0.094px;">InjectorCertStore</div>
<svg class="fo" style="left:6px;top:330px" width="15" height="15" viewBox="0 0 15 15"><g transform="translate(0 0.5)"><path d="M0.5 1.9 L5.9 1.9 L6.4 0.9 L13.5 0.9 L13.5 12.8 L0.5 12.8 Z" fill="url(#fg)" stroke="#d8b458" stroke-width="0.9"/><path d="M6.4 0.9 L13.5 0.9 L13.5 3.7 L7.3 3.7 L5.9 1.9 Z" fill="#f9dc86" stroke="#d8b458" stroke-width="0.9"/><path d="M1.3 12 L1.3 2.7 L5.8 2.7" fill="none" stroke="#fff3c4" stroke-width="0.7"/><path d="M0.3 12.85 L13.7 12.85" stroke="#c29a3f" stroke-width="0.9"/><rect x="7.9" y="1.4" width="2.2" height="1.3" fill="#fff"/><rect x="10.1" y="1.4" width="1.9" height="1.3" fill="#3b8fe8"/></g></svg>
<div class="t" style="left:23px;top:330px;line-height:19px;height:19px;letter-spacing:-0.107px;">PolicyCertStore</div>
<svg class="fo" style="left:6px;top:349px" width="15" height="15" viewBox="0 0 15 15"><g transform="translate(0 0.5)"><path d="M0.5 1.9 L5.9 1.9 L6.4 0.9 L13.5 0.9 L13.5 12.8 L0.5 12.8 Z" fill="url(#fg)" stroke="#d8b458" stroke-width="0.9"/><path d="M6.4 0.9 L13.5 0.9 L13.5 3.7 L7.3 3.7 L5.9 1.9 Z" fill="#f9dc86" stroke="#d8b458" stroke-width="0.9"/><path d="M1.3 12 L1.3 2.7 L5.8 2.7" fill="none" stroke="#fff3c4" stroke-width="0.7"/><path d="M0.3 12.85 L13.7 12.85" stroke="#c29a3f" stroke-width="0.9"/><rect x="7.9" y="1.4" width="2.2" height="1.3" fill="#fff"/><rect x="10.1" y="1.4" width="1.9" height="1.3" fill="#3b8fe8"/></g></svg>
<div class="t" style="left:23px;top:349px;line-height:19px;height:19px;letter-spacing:-0.162px;">Remote Desktop</div>
<svg class="fo" style="left:6px;top:368px" width="15" height="15" viewBox="0 0 15 15"><g transform="translate(0 0.5)"><path d="M0.5 1.9 L5.9 1.9 L6.4 0.9 L13.5 0.9 L13.5 12.8 L0.5 12.8 Z" fill="url(#fg)" stroke="#d8b458" stroke-width="0.9"/><path d="M6.4 0.9 L13.5 0.9 L13.5 3.7 L7.3 3.7 L5.9 1.9 Z" fill="#f9dc86" stroke="#d8b458" stroke-width="0.9"/><path d="M1.3 12 L1.3 2.7 L5.8 2.7" fill="none" stroke="#fff3c4" stroke-width="0.7"/><path d="M0.3 12.85 L13.7 12.85" stroke="#c29a3f" stroke-width="0.9"/><rect x="7.9" y="1.4" width="2.2" height="1.3" fill="#fff"/><rect x="10.1" y="1.4" width="1.9" height="1.3" fill="#3b8fe8"/></g></svg>
<div class="t" style="left:23px;top:368px;line-height:19px;height:19px;letter-spacing:-0.127px;">Certificate Enrollment Requests</div>
</div>
<svg class="ic" style="left:0;top:0" width="941" height="489" viewBox="0 0 941 489">
<rect x="5" y="447" width="292" height="17" fill="#fff"/>
<rect x="280" y="87" width="17" height="377" fill="#fff"/>
<rect x="280" y="88" width="16.4" height="374.7" fill="#f0f0f0"/>
<rect x="6.4" y="447" width="274" height="15.7" fill="#f0f0f0"/>
<rect x="280" y="104.9" width="14.8" height="237.1" fill="#cdcdcd"/>
<rect x="23" y="447.2" width="230" height="14.6" fill="#cdcdcd"/>
<rect x="302" y="463" width="637" height="1" fill="#fff"/>
<rect x="922" y="87" width="17" height="377" fill="#fff"/>
<rect x="922" y="88" width="16" height="374.7" fill="#f0f0f0"/>
<rect x="922" y="104.9" width="15" height="245.8" fill="#cdcdcd"/>
<g fill="none" stroke="#505050" stroke-width="2.15">
<path d="M284.70 99.50 L287.60 95.67 L290.50 99.50"/>
<path d="M284.70 435.60 L287.60 439.43 L290.50 435.60"/>
<path d="M16.50 451.55 L12.57 454.50 L16.50 457.45"/>
<path d="M268.60 451.45 L272.53 454.40 L268.60 457.35"/>
<path d="M926.50 99.50 L929.40 95.67 L932.30 99.50"/>
<path d="M926.50 452.60 L929.40 456.43 L932.30 452.60"/>
</g></svg>
<div class="a" style="left:939px;top:465px;width:1px;height:23px;background:#fafafa"></div>
<div class="a" style="left:719px;top:467px;width:1px;height:20px;background:#d7d7d7"></div>
<div class="a" style="left:852px;top:467px;width:1px;height:20px;background:#d7d7d7"></div>
<div class="a" style="left:937px;top:467px;width:1px;height:20px;background:#d7d7d7"></div>
</div></div></body></html>
